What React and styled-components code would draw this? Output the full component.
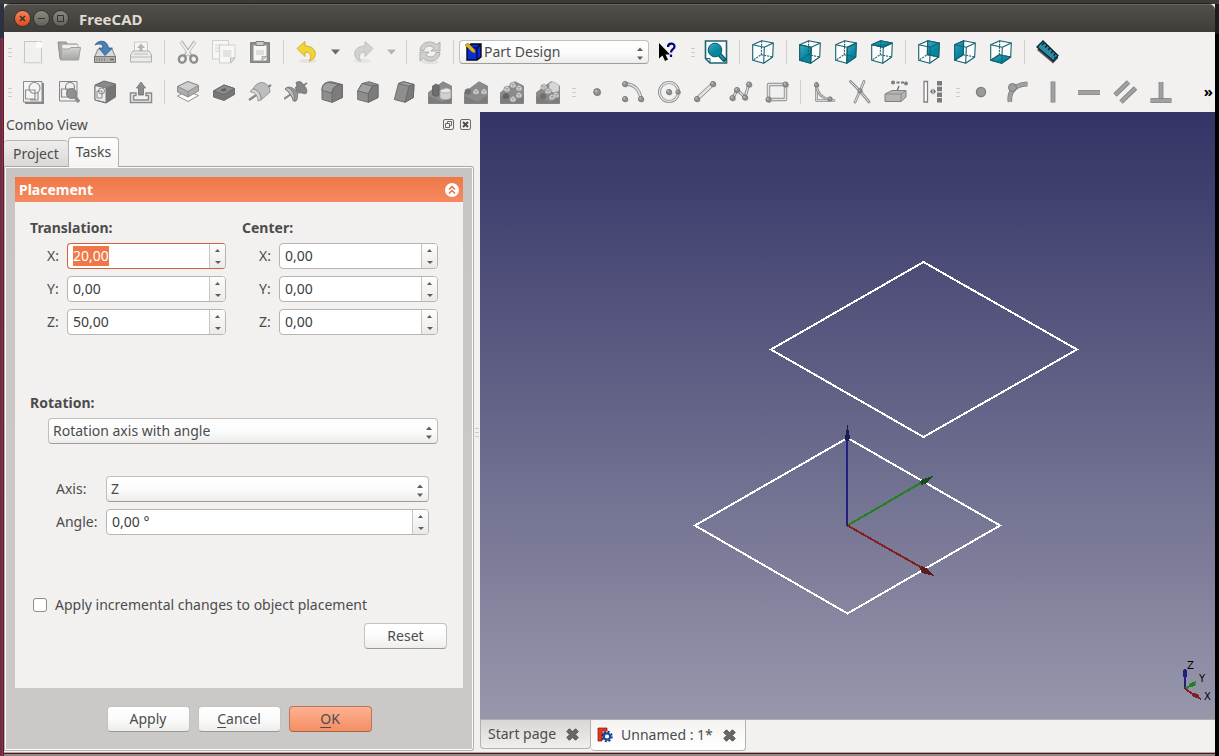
import React, { useEffect, useRef, useState } from 'react';
import styled, { createGlobalStyle } from 'styled-components';

const GlobalStyle = createGlobalStyle`
  * {
    box-sizing: border-box;
  }

  body {
    margin: 0;
    background: #3c3b37;
    color: #4c4c4c;
    font-family: 'Noto Sans', 'Open Sans', sans-serif;
    font-size: 14px;
    line-height: 20px;
  }

  button,
  input,
  select {
    font: inherit;
    color: inherit;
    margin: 0;
  }
`;

const SDesktop = styled.div`
  min-height: 100vh;
  display: flex;
  flex-direction: column;
  padding: 4px 4px 0 4px;
  background:
    linear-gradient(#3c3b37, #3c3b37) top / 100% 4px no-repeat,
    linear-gradient(#1c1c1c 34px, #000 34px) right / 4px 100% no-repeat,
    linear-gradient(90deg, #6b2c47 2px, #c0202a 2px) 0 38px / 3px 100% no-repeat,
    #2c3040;
`;

const SWindow = styled.div`
  flex: 1;
  display: flex;
  flex-direction: column;
  background: #f2f1f0;
`;

const STitleBar = styled.header`
  display: flex;
  align-items: center;
  gap: 2px;
  height: 28px;
  padding: 0 10px;
  border-top: 1px solid #65635c;
  border-radius: 6px 6px 0 0;
  box-shadow: 0 -4px 0 -3px #24231f;
  background: linear-gradient(#504f49, #3e3d39);
`;

const SWindowButton = styled.button`
  display: flex;
  width: 17px;
  height: 17px;
  padding: 0;
  border: 1px solid #33322e;
  border-radius: 50%;
  color: #34332f;
  background: ${(p) =>
    p.$close
      ? 'linear-gradient(#f4845c, #df4b1d)'
      : 'linear-gradient(#8b897f, #62605a)'};
`;

const STitle = styled.h1`
  margin: 0 0 0 8px;
  color: #dfdbd2;
  font-size: 15px;
  font-weight: bold;
`;

const SToolBar = styled.div`
  display: flex;
  gap: 2px;
  height: 40px;
  overflow: hidden;
`;

const SToolGroup = styled.div`
  display: flex;
  align-items: center;
`;

const SGrip = styled.span`
  width: 4px;
  height: 9px;
  margin: 0 3px 0 4px;
  background: repeating-linear-gradient(#cfcbc7 0 1px, transparent 1px 4px);
`;

const SSeparator = styled.span`
  width: 1px;
  height: 24px;
  margin: 0 5px;
  background: #d2cfcb;
`;

const SToolButton = styled.button`
  display: flex;
  align-items: center;
  justify-content: center;
  width: ${(p) => (p.$narrow ? 20 : 36)}px;
  height: 36px;
  padding: 0;
  border: 0;
  background: none;
`;

const SMore = styled.button`
  margin-left: auto;
  padding: 0 2px 2px;
  border: 0;
  background: none;
  color: #000;
  font-size: 15px;
  font-weight: bold;
`;

const SMain = styled.main`
  flex: 1;
  display: flex;
`;

const SDock = styled.aside`
  flex: 0 1 470px;
  display: flex;
  flex-direction: column;
  padding-bottom: 1px;
`;

const SDockTitle = styled.div`
  display: flex;
  align-items: center;
  gap: 5px;
  height: 25px;
  padding: 0 2px;
`;

const SDockName = styled.h2`
  flex: 1;
  margin: 0;
  font-size: 14px;
  font-weight: normal;
`;

const SDockButton = styled.button`
  display: flex;
  width: 12px;
  height: 12px;
  padding: 0;
  border: 0;
  background: none;
`;

const STabs = styled.div`
  display: flex;
  align-items: flex-end;
  height: 29px;
`;

const STab = styled.button`
  position: relative;
  height: ${(p) => (p.$active ? 30 : 26)}px;
  margin-bottom: ${(p) => (p.$active ? -1 : 0)}px;
  padding: 0 ${(p) => (p.$active ? 7 : 9)}px ${(p) => (p.$active ? 2 : 0)}px;
  border: 1px solid #b5b1ac;
  border-bottom: 0;
  border-left-width: ${(p) => (p.$active ? 1 : 0)}px;
  border-right-width: ${(p) => (p.$active ? 1 : 0)}px;
  border-radius: 4px 4px 0 0;
  background: ${(p) =>
    p.$active
      ? 'linear-gradient(#fefefe, #f5f4f3)'
      : 'linear-gradient(#efeeed, #dad8d6)'};
`;

const SPane = styled.div`
  flex: 1;
  display: flex;
  flex-direction: column;
  padding: 10px 10px 18px;
  border: 1px solid #b5b1ac;
  border-top-color: #a9a6a2;
  border-radius: 0 3px 3px 0;
  box-shadow: inset 0 0 0 1px #fbfbfa;
  background: linear-gradient(#c8c4c1, #cac9c7 60%, #cac9c7);
`;

const SGroup = styled.section`
  background: #f2f1f0;
`;

const SGroupHeader = styled.div`
  display: flex;
  align-items: center;
  justify-content: space-between;
  height: 25px;
  padding: 0 4px;
  color: #fff;
  font-weight: bold;
  background: linear-gradient(#f07746, #f58a62);
`;

const SGroupBody = styled.form`
  display: flex;
  flex-direction: column;
  padding: 16px 16px 39px 15px;
`;

const SColumns = styled.div`
  display: grid;
  grid-template-columns: 1fr 1fr;
  gap: 16px;
  padding-right: 9px;
`;

const SFields = styled.div`
  display: flex;
  flex-direction: column;
  gap: 7px;
`;

const SAngleFields = styled(SFields)`
  margin-top: 32px;
  padding: 0 18px 0 26px;
`;

const SHeading = styled.h3`
  margin: ${(p) => (p.$spaced ? 58 : 0)}px 0 5px;
  font-size: 14px;
  font-weight: bold;
`;

const SField = styled.div`
  display: grid;
  grid-template-columns: ${(p) => (p.$wide ? 50 : 37)}px 1fr;
  align-items: center;
`;

const SLabel = styled.label`
  padding-left: ${(p) => (p.$indent ? 17 : 0)}px;
`;

const SSpin = styled.div`
  display: flex;
  height: 26px;
  border: 1px solid #b8b4af;
  border-radius: 4px;
  overflow: hidden;
  background: #fff;

  &:has(input:focus) {
    border-color: #d2603a #b8b4af #d2603a #d2603a;
  }
`;

const SSpinInput = styled.input`
  flex: 1;
  min-width: 0;
  padding: 0 5px;
  border: 0;
  outline: 0;
  background: none;
  color: #3c3c3c;

  &::selection {
    background: #f07746;
    color: #fff;
  }
`;

const SSpinButtons = styled.div`
  display: flex;
  flex-direction: column;
  width: 16px;
  border-left: 1px solid #c9c6c2;
  background: linear-gradient(#fdfdfd, #eceae9);
`;

const SSpinButton = styled.button`
  flex: 1;
  display: flex;
  align-items: center;
  justify-content: center;
  padding: 0;
  border: 0;
  background: none;
`;

const SCombo = styled.div`
  position: relative;
  width: ${(p) => (p.$tool ? '190px' : 'auto')};
  margin-left: ${(p) => (p.$indent ? 18 : 0)}px;
  margin-right: ${(p) => (p.$indent ? 9 : 0)}px;

  svg {
    position: absolute;
    pointer-events: none;
  }
`;

const SSelect = styled.select`
  appearance: none;
  display: block;
  width: 100%;
  height: ${(p) => (p.$tool ? 24 : 26)}px;
  padding: 0 24px 0 ${(p) => (p.$tool ? 24 : 4)}px;
  border: 1px solid #c2beb9;
  border-bottom-color: #a09d99;
  border-radius: 4px;
  background: linear-gradient(#fff, #fcfcfc 50%, #edeceb);
`;

const SCheckRow = styled.div`
  display: flex;
  align-items: center;
  gap: 8px;
  margin: 60px 0 8px 3px;
`;

const SCheckbox = styled.input`
  appearance: none;
  width: 14px;
  height: 14px;
  border: 1px solid #8f8c88;
  border-radius: 3px;
  background: #fff;
`;

const SButton = styled.button`
  width: 83px;
  height: 26px;
  padding: 0;
  border: 1px solid ${(p) => (p.$primary ? '#b8765a' : '#c5c2be')};
  border-bottom-color: ${(p) => (p.$primary ? '#a5664c' : '#9c9995')};
  border-radius: 4px;
  background: ${(p) =>
    p.$primary
      ? 'linear-gradient(#ffb191, #f48e64)'
      : 'linear-gradient(#fff, #fbfbfb 50%, #eeedec)'};
`;

const SResetButton = styled(SButton)`
  align-self: flex-end;
`;

const SActions = styled.div`
  display: flex;
  justify-content: center;
  gap: 8px;
  margin-top: 18px;
`;

const SMnemonic = styled.span`
  text-decoration: underline;
  text-underline-offset: 3px;
`;

const SSplitter = styled.div`
  display: flex;
  flex: 0 0 6px;
  align-items: center;

  ${SGrip} {
    margin: 0 1px;
  }
`;

const SDocument = styled.section`
  flex: 1;
  display: flex;
  flex-direction: column;
  min-width: 0;
`;

const SViewport = styled.div`
  position: relative;
  flex: 1;
  display: flex;
  background: linear-gradient(#333366, #9797ac);
`;

const SScene = styled.svg`
  flex: 1;
  min-width: 0;
  height: 100%;
  min-height: 400px;
`;

const SCompass = styled.svg`
  position: absolute;
  right: 0;
  bottom: 14px;
`;

const SDocTabs = styled.div`
  display: flex;
  align-items: flex-start;
  height: 33px;
  border-top: 1px solid #b0adaa;
`;

const SDocTab = styled.div`
  display: flex;
  align-items: center;
  height: ${(p) => (p.$active ? 31 : 29)}px;
  padding: 0 ${(p) => (p.$active ? 9 : 11)}px 0 ${(p) => (p.$active ? 6 : 7)}px;
  border: 1px solid #b5b1ac;
  border-top: 0;
  border-left-width: ${(p) => (p.$active ? 0 : 1)}px;
  border-radius: 0 0 4px 4px;
  background: ${(p) =>
    p.$active
      ? 'linear-gradient(#f4f3f2, #fff)'
      : 'linear-gradient(#d9d6d4, #f0efee)'};
`;

const SDocTabName = styled.button`
  display: flex;
  align-items: center;
  gap: 8px;
  padding: 0;
  border: 0;
  background: none;
  white-space: nowrap;
`;

const SClose = styled.button`
  display: flex;
  margin-left: 10px;
  padding: 0;
  border: 0;
  background: none;
`;

const SFrameEdge = styled.footer`
  height: 4px;
  background: linear-gradient(#aaa8a5 0 1px, #5e1215 1px 2px, #8b8a85 2px);
`;

function Node({ x, y, r = 2.6 }) {
  return (
    <>
      <circle cx={x + 0.8} cy={y + 0.8} r={r} fill="#bdbdbd" />
      <circle cx={x} cy={y} r={r} fill="#929292" stroke="#707070" strokeWidth="0.8" />
      <circle cx={x - 0.8} cy={y - 0.8} r={r / 3} fill="#c4c4c4" />
    </>
  );
}

function Tube({ d, w = 3.4 }) {
  return (
    <g fill="none" strokeLinecap="round" strokeLinejoin="round">
      <path d={d} stroke="#8d8d8d" strokeWidth={w} />
      <path d={d} stroke="#e4e4e4" strokeWidth={w - 1.8} />
    </g>
  );
}

// Solid bar with a thin outline, used by the sketch constraints
function Bar({ d }) {
  return (
    <g fill="none">
      <path d={d} stroke="#858585" strokeWidth="4.8" />
      <path d={d} stroke="#a1a1a1" strokeWidth="3" />
    </g>
  );
}

const cubeFaces = {
  front: '1.7,4.7 13.3,7.3 12.7,23.3 1.7,20.3',
  right: '13.3,7.3 22.3,3 21.7,17 12.7,23.3',
  top: '1.7,4.7 10.7,0.7 22.3,3 13.3,7.3',
  rear: '10.7,0.7 22.3,3 21.7,17 10.3,14.7',
  left: '1.7,4.7 10.7,0.7 10.3,14.7 1.7,20.3',
  bottom: '1.7,20.3 10.3,14.7 21.7,17 12.7,23.3',
};

function ViewCube({ face }) {
  return (
    <g strokeLinejoin="round" strokeWidth="1.1" stroke="#16606f" fill="none">
      <path d="M1.7 4.7 10.7.7 22.3 3 21.7 17 12.7 23.3 1.7 20.3Z" fill="#fcfdfd" />
      {face && <polygon points={cubeFaces[face]} fill="url(#teal)" />}
      <path d="M10.7.7 10.3 14.7 1.7 20.3M10.3 14.7 21.7 17" strokeDasharray="2 1" />
      <path d="M1.7 4.7 13.3 7.3 22.3 3M13.3 7.3 12.7 23.3" />
    </g>
  );
}

function Block({ children, shape }) {
  return (
    <g stroke="#666" strokeWidth="0.9" strokeLinejoin="round">
      <path d={shape} fill="#8e8e8e" />
      {children}
    </g>
  );
}

function MiniBox({ x, y, fill = '#d0d0d0' }) {
  return (
    <g transform={`translate(${x} ${y})`} stroke="#7a7a7a" strokeWidth="0.5">
      <path d="M0 1.5 3 0 6 1.5V5L3 6.5 0 5Z" fill={fill} />
      <path d="M0 1.5 3 2.8 6 1.5M3 2.8V6.5" fill="none" />
    </g>
  );
}

function PatternBase() {
  return (
    <>
      <path d="M.5 12.5 15 1.7 23.5 6V23.500H.5Z" fill="#8b8b8b" stroke="#777" strokeWidth="0.7" />
      <path d="M.5 16 14 22 23.500 15V23.500H.5Z" fill="#7c7c7c" />
    </>
  );
}

const icons = {
  new: (
    <>
      <path d="M3.5 1.5H20.5V22.5H3.5Z" fill="#f0f0ef" stroke="#c6c6c5" />
      <circle cx="18" cy="5" r="3.5" fill="#fbfbfb" />
      <path d="M2 23H22" stroke="#dedddc" />
    </>
  ),
  open: (
    <>
      <path d="M1 2H9L10.5 4H20V19H3Z" fill="#a9a9a7" stroke="#8f8f8d" />
      <path d="M5 4.5H21V12H5Z" fill="#efefee" stroke="#b8b8b6" />
      <path d="M3.5 20 5 9H12L14 7.5H23.5L21.5 20Z" fill="url(#grey)" stroke="#a0a09e" />
    </>
  ),
  save: (
    <>
      <path d="M5 9H19L22.5 17V22.5H1.5V17Z" fill="#d9d9d7" stroke="#858583" />
      <path d="M1.5 16.5H22.5V22.5H1.5Z" fill="#b0b0ae" stroke="#777775" />
      <path d="M4 18V21M6.5 18V21M9 18V21M11.5 18V21" stroke="#888" />
      <path d="M17 19.5H21" stroke="#6b6b69" strokeWidth="1.5" />
      <path d="M2 5C4 .5 14-1.5 15.5 8H19.5L12 15.5 6 8H10C10 4 6 3 2 5Z" fill="#4b80b8" stroke="#275587" strokeWidth="0.8" />
    </>
  ),
  print: (
    <>
      <path d="M5.5 2H18.5V12H5.5Z" fill="#f6f6f5" stroke="#c9c9c7" />
      <path d="M12 3.5 16 8H13.5V12H10.5V8H8Z" fill="#b3b3b1" />
      <path d="M4 11H20L22.5 15V22H1.5V15Z" fill="#ebebea" stroke="#aeaeac" />
      <path d="M5 14H19M2 17H22" stroke="#bdbdbb" />
    </>
  ),
  cut: (
    <g fill="none">
      <path d="M5 1.5 15 16M19 1.5 9 16" stroke="#b0b0ae" strokeWidth="3.6" />
      <path d="M5 2 14 15M19 2 10 15" stroke="#f1f1f0" strokeWidth="1.8" />
      <ellipse cx="6.3" cy="19" rx="3.3" ry="3.7" stroke="#8d8d8b" strokeWidth="2.4" transform="rotate(25 6.3 19)" />
      <ellipse cx="17.7" cy="19" rx="3.3" ry="3.7" stroke="#8d8d8b" strokeWidth="2.4" transform="rotate(-25 17.7 19)" />
    </g>
  ),
  copy: (
    <g fill="#f7f7f6" stroke="#cfcfcd">
      <path d="M.5.5H16.5V19H.5Z" />
      <path d="M3 5H11M3 8H9M3 11H8" />
      <path d="M7.5 5H23V18L18.5 23H7.5Z" />
      <path d="M11 10H19.5V17H11Z" fill="#e2e2e1" stroke="none" />
      <path d="M18.5 23V18H23Z" fill="#e4e4e3" stroke="#b9b9b7" />
    </g>
  ),
  paste: (
    <>
      <path d="M2.5 2.5H21.5V22.5H2.5Z" fill="#8f8f8d" stroke="#80807e" />
      <path d="M5.5 5.5H18.5V20.5H5.5Z" fill="#f6f6f5" />
      <path d="M8 1.5H16V5.5H8Z" fill="#c9c9c7" stroke="#80807e" />
      <path d="M8 10H16V15H8Z" fill="#dededd" />
      <path d="M14 20.5V16.5H18.5Z" fill="#d2d2d0" stroke="#979795" strokeWidth="0.7" />
    </>
  ),
  undo: (
    <>
      <ellipse cx="13" cy="21" rx="9" ry="2" fill="#e4e3e2" />
      <path d="M2 8.5 10 1.5V6C17 6 21.5 10 20 16 19 19.5 16 20.5 14 21 17 17 16 12 10 12V16.5Z" fill="#f0d43c" stroke="#cfab12" strokeWidth="0.9" />
    </>
  ),
  redo: (
    <>
      <ellipse cx="11" cy="21" rx="9" ry="2" fill="#e6e5e4" />
      <path d="M22 8.5 14 1.5V6C7 6 2.5 10 4 16 5 19.5 8 20.5 10 21 7 17 8 12 14 12V16.5Z" fill="#d2d2d0" stroke="#bababa" strokeWidth="0.9" />
    </>
  ),
  refresh: (
    <>
      <ellipse cx="12" cy="22" rx="9" ry="2" fill="#e3e2e1" />
      <g fill="#cfcfcd" stroke="#aaaaa8" strokeWidth="0.9">
        <path d="M2 10.5C2 3 12-1 18.5 4.5L22 2V11H13L16 8C12 4.5 7 6 6 10.5Z" />
        <path d="M22 12.5C22 20 12 24 5.5 18.5L2 21V12H11L8 15C12 18.5 17 17 18 12.5Z" />
      </g>
    </>
  ),
  whatsThis: (
    <>
      <path d="M4 3V18.5L7.5 15.5 10 21 13 19.5 10.5 14.5H15Z" fill="#000" />
      <path d="M13 7C13 2.5 19.5 2.5 19.5 6.5 19.5 9.5 16 9 16 12.5M16 14.5V17" fill="none" stroke="#00007a" strokeWidth="2.2" />
    </>
  ),
  fit: (
    <>
      <path d="M1.5 1H22.5V23H6L1.5 18.5Z" fill="#fff" stroke="#1d6472" strokeWidth="1.6" />
      <path d="M1.5 18.5H6V23" fill="none" stroke="#1d6472" />
      <path d="M15 14 20 19.5" stroke="#0d4b58" strokeWidth="4.5" strokeLinecap="round" />
      <path d="M15.5 14.5 19.5 19" stroke="#1c91ad" strokeWidth="2.4" strokeLinecap="round" />
      <circle cx="11" cy="10" r="6.8" fill="url(#teal)" stroke="#0e5766" />
    </>
  ),
  axo: <ViewCube />,
  front: <ViewCube face="front" />,
  right: <ViewCube face="right" />,
  top: <ViewCube face="top" />,
  rear: <ViewCube face="rear" />,
  left: <ViewCube face="left" />,
  bottom: <ViewCube face="bottom" />,
  measure: (
    <>
      <path d="M1 10 6 5 22 18 17 23.5Z" fill="#555" />
      <path d="M1 7 7 1 22 15.5 17.5 21Z" fill="#2a8ba5" stroke="#0b252c" strokeWidth="1.3" />
      <path d="M8 3 6 5M11 5.5 9 7.5M14 8 12 10M17 11 15 13M19.5 13.5 17.5 15.5" stroke="#051c22" strokeWidth="1.3" />
      <path d="M18 17 22 16V18L18 21.5Z" fill="#0c414d" />
    </>
  ),
  sketch: (
    <>
      <path d="M4 3H23V24H4Z" fill="#888" />
      <path d="M2.5 1.5H21V22H2.5Z" fill="#f4f4f4" stroke="#8a8a8a" />
      <g fill="none" stroke="#8f8f8f" strokeWidth="1.2">
        <circle cx="13.500" cy="8" r="5.5" />
        <path d="M4.5 10H14V19H4.500ZM17 12V20H9" />
      </g>
    </>
  ),
  sketchView: (
    <>
      <path d="M2.5 1.5H20V21H2.5Z" fill="#f0f0f0" stroke="#858585" />
      <g fill="none" stroke="#858585" strokeWidth="1.2">
        <circle cx="13" cy="7" r="4.5" />
        <path d="M4.5 9H11V17H4.5Z" />
      </g>
      <circle cx="14.5" cy="13.5" r="5" fill="#919191" stroke="#777" />
      <path d="M18 17 22 22" stroke="#8a8a8a" strokeWidth="3.5" />
    </>
  ),
  sketchMap: (
    <>
      <path d="M2 5 11 1 22.5 4V17L13 23 2 20Z" fill="#8a8a8a" stroke="#6b6b6b" />
      <path d="M13 8 22.5 4V17L13 23Z" fill="#757575" />
      <path d="M2 5.5 13 8V22.5L2 20Z" fill="#ededed" stroke="#777" />
      <circle cx="8.5" cy="11" r="3" fill="none" stroke="#888" />
      <path d="M4 11H9V18H4Z" fill="none" stroke="#888" />
    </>
  ),
  leave: (
    <g stroke="#777" strokeWidth="0.9">
      <path d="M1.5 13H7V15.5H4.5V20H19.5V15.5H17V13H22.5V22.5H1.5Z" fill="#f1f1f1" stroke="#8a8a8a" strokeWidth="1.5" />
      <path d="M12 2 16.5 8H14.5V15H9.5V8H7.5Z" fill="#8c8c8c" />
    </g>
  ),
  pad: (
    <g stroke="#858585" strokeWidth="0.9" strokeLinejoin="round">
      <path d="M1.5 16 11 11 22.5 15.500 12 21.5Z" fill="#fff" />
      <path d="M1.5 6.5 12 1.5 22.5 5.5V11L12 17 1.5 12Z" fill="#adadad" />
      <path d="M1.5 6.5 12 1.5 22.5 5.5 12 11.5Z" fill="#cfcfcf" />
      <path d="M12 11.5V17" />
    </g>
  ),
  pocket: (
    <g stroke="#666" strokeWidth="0.9" strokeLinejoin="round">
      <path d="M1.5 11 12 5 22.5 8.5V14.500L12 20.5 1.5 17Z" fill="#777" />
      <path d="M1.5 11 12 5 22.5 8.500 12 14.500Z" fill="#8c8c8c" />
      <path d="M8 10 13 8 14.500 10.500 11 11.500Z" fill="#5f5f5f" stroke="none" />
    </g>
  ),
  revolve: (
    <g stroke="#858585" strokeWidth="0.8">
      <path d="M1 20 23 5" stroke="#8a8a8a" strokeWidth="2.4" />
      <path d="M5 9C7 5 10 2.500 14 2.5C19 3 22 7 22 12L13 20C13 15 11 10 5 9Z" fill="#bdbdbd" />
      <path d="M2.500 12C3 10 4 9 5 9 11 10 13 15 13 20L10 21C10 16 7 12 2.500 12Z" fill="#d5d5d5" />
    </g>
  ),
  groove: (
    <g stroke="#6b6b6b" strokeWidth="0.8">
      <path d="M0 19 23 3" stroke="#858585" strokeWidth="2" />
      <path d="M12 2.500C15 1 17 1.500 18 3 21 6 24 10 22.500 13 21 15 18 12 15 13L11 8C13 7 13 5 12 2.500Z" fill="#858585" />
      <path d="M1 9C3 6.500 7 6.500 10 9L14 13C13 16 14 19 12 21 9 22 9 19 8 17 6 13 4 11 1 9Z" fill="#989898" />
      <path d="M1 9C3 7 5 7.500 7 10 10 13 11 17 10 21 9 22 9 19 8 17 6 13 4 11 1 9Z" fill="#c2c2c2" />
    </g>
  ),
  fillet: (
    <Block shape="M2 9C2 4 6 1.7 11.5 1.7L22.3 4.5V17.5L12 22.3 2 19.5Z">
      <path d="M2 10.500C2 5 5 2.700 9 2.500L21 5C16 5 12 8 12 13Z" fill="#a0a0a0" />
      <path d="M12 13C12 8 16 4.500 22.3 4.5V17.5L12 22.3Z" fill="#7c7c7c" />
    </Block>
  ),
  chamfer: (
    <Block shape="M1.7 11 6 3.5 13 1.7 22 4.5V17.5L12.3 22.3 1.7 19.5Z">
      <path d="M1.7 11 6 3.5 16.500 6 12.3 13.500Z" fill="#a2a2a2" />
      <path d="M12.3 13.500 16.500 6 22 4.5V17.5L12.3 22.3Z" fill="#7c7c7c" />
    </Block>
  ),
  draft: (
    <Block shape="M6.5 3.5 11.5 1.7 22 4.5 21.3 17.5 13 22.3 2.3 19.5Z">
      <path d="M6.5 3.5 11.5 1.7 22 4.5 17 6.200Z" fill="#a1a1a1" />
      <path d="M17 6.200 22 4.500 21.3 17.5 13 22.3Z" fill="#7a7a7a" />
    </Block>
  ),
  mirrored: (
    <>
      <PatternBase />
      <path d="M4.500 6 8 4 11 5.500V15L8 16.5 4.500 15Z" fill="#6c6c6c" stroke="#575757" strokeWidth="0.7" />
      <path d="M12 11V17.500C13 20.500 22 20.500 23 17.500V11Z" fill="#d0d0d0" stroke="#999" strokeWidth="0.7" />
      <path d="M12 11C13 8.500 16 9.500 18 8 21 8.500 23 9.500 23 11 22 13.500 13 13.500 12 11Z" fill="#e6e6e6" stroke="#a5a5a5" strokeWidth="0.7" />
    </>
  ),
  linear: (
    <>
      <PatternBase />
      <MiniBox x={1} y={8.5} fill="#6c6c6c" />
      <MiniBox x={9} y={8.5} />
      <MiniBox x={17} y={8.5} />
    </>
  ),
  polar: (
    <>
      <PatternBase />
      <MiniBox x={10} y={2} />
      <MiniBox x={16} y={5} />
      <MiniBox x={4} y={6} />
      <MiniBox x={16} y={12} />
      <MiniBox x={3} y={13} fill="#5c5c5c" />
      <MiniBox x={10} y={16} />
    </>
  ),
  multi: (
    <>
      <PatternBase />
      <path d="M13 3.500 17 1.500 23 5V11L18 13 13 10Z" fill="#d6d6d6" stroke="#999" strokeWidth="0.5" />
      <MiniBox x={5} y={4} />
      <MiniBox x={9} y={8} />
      <MiniBox x={4} y={13} fill="#6c6c6c" />
      <MiniBox x={13} y={14} />
      <MiniBox x={17} y={12} />
    </>
  ),
  point: <Node x={12} y={12} r={3.4} />,
  arc: (
    <>
      <Tube d="M5 4C13 4 19 10 20 19" />
      <Node x={4} y={4} />
      <Node x={20} y={19} />
      <Node x={4} y={19} />
    </>
  ),
  circle: (
    <>
      <circle cx="12" cy="12" r="9.5" fill="none" stroke="#8d8d8d" strokeWidth="3" />
      <circle cx="12" cy="12" r="9.5" fill="none" stroke="#e6e6e6" strokeWidth="1.3" />
      <Node x={12} y={12} />
      <Node x={21} y={12} r={2.2} />
    </>
  ),
  line: (
    <>
      <Tube d="M4 19 20 4" w={4.200} />
      <Node x={4} y={19} />
      <Node x={20} y={4} />
    </>
  ),
  polyline: (
    <>
      <Tube d="M4 18 8 10 16 17 20 4" w={3} />
      <Node x={3.5} y={18} />
      <Node x={8} y={10} />
      <Node x={16} y={17.5} />
      <Node x={20} y={4.5} />
    </>
  ),
  rectangle: (
    <>
      <Tube d="M3.5 4.5H20.5V19.5H3.5Z" />
      <Node x={20.5} y={4.5} />
      <Node x={3.5} y={19.5} />
    </>
  ),
  sketchFillet: (
    <>
      <Tube d="M4.5 3V20.5H22" w={2.6} />
      <Tube d="M4.5 5C5 13 9 18 18 19.5" w={2.6} />
      <Node x={4.5} y={5} r={2.2} />
      <Node x={18} y={19} r={2.2} />
    </>
  ),
  trim: (
    <>
      <Tube d="M2.500 1.500 12 11 21 22" w={2.8} />
      <Tube d="M16 1.500 12 11 7 22" w={2.8} />
      <Node x={12} y={11} r={2.2} />
    </>
  ),
  external: (
    <>
      <path d="M8 2.5H22" stroke="#777" strokeWidth="2" strokeDasharray="3 1.5" />
      <circle cx="9" cy="2.5" r="2" fill="#808080" />
      <circle cx="22" cy="3.5" r="2" fill="#808080" />
      <path d="M15 6 13 11" stroke="#666" strokeWidth="1.3" />
      <path d="M1 14 8 10.5H22V17L17 21.5H1Z" fill="#b4b4b4" stroke="#808080" />
      <path d="M1 14H17L22 10.5M17 14V21.5" fill="none" stroke="#8b8b8b" />
    </>
  ),
  symmetric: (
    <>
      <path d="M4 1.5H7.5V22H4Z" fill="#fff" stroke="#808080" strokeWidth="1.3" />
      <path d="M10 11.5 12.5 8.5V14.5ZM16 11.5 13.5 8.5V14.5Z" fill="#6e6e6e" />
      <path d="M19.5 1V23" stroke="#7b7b7b" strokeWidth="5" strokeDasharray="4.5 1.2" />
    </>
  ),
  coincident: <circle cx="12" cy="12" r="4.6" fill="#999" stroke="#7c7c7c" strokeWidth="1.2" />,
  tangent: (
    <>
      <Bar d="M5 22C3.5 12 10 4 22.5 4" />
      <circle cx="7.5" cy="7.5" r="4" fill="#9d9d9d" stroke="#7a7a7a" />
    </>
  ),
  vertical: <Bar d="M12 1.5V22.5" />,
  horizontal: <Bar d="M1 12.5H23" />,
  parallel: (
    <>
      <Bar d="M2 15 15.5 2" />
      <Bar d="M8 22 22.5 8" />
    </>
  ),
  perpendicular: (
    <>
      <Bar d="M12 2V20" />
      <Bar d="M1.5 20.5H22.5" />
    </>
  ),
};

const fileTools = [
  'new', 'open', 'save', 'print', '|', 'cut', 'copy', 'paste', '|',
  'undo', 'v', 'redo', 'v', '|', 'refresh', '|',
];
const viewTools = [
  'fit', '|', 'axo', '|', 'front', 'right', 'top', '|',
  'rear', 'left', 'bottom', '|', 'measure',
];
const partTools = [
  'sketch', 'sketchView', 'sketchMap', 'leave', '|',
  'pad', 'pocket', 'revolve', 'groove', 'fillet', 'chamfer', 'draft',
  'mirrored', 'linear', 'polar', 'multi',
];
const geometryTools = [
  'point', 'arc', 'circle', 'line', 'polyline', 'rectangle', '|',
  'sketchFillet', 'trim', 'external', 'symmetric',
];
const constraintTools = [
  'coincident', 'tangent', 'vertical', 'horizontal', 'parallel', 'perpendicular',
];

function Tools({ items }) {
  return items.map((item, i) => {
    if (item === '|') return <SSeparator key={i} />;
    if (item === 'v') {
      return (
        <SToolButton key={i} $narrow aria-label="history">
          <svg width="9" height="6" viewBox="0 0 9 6">
            <path d="M0 .5H9L4.5 5.5Z" fill={i > 11 ? '#b5b3b0' : '#6b6966'} />
          </svg>
        </SToolButton>
      );
    }
    return (
      <SToolButton key={i} aria-label={item}>
        <svg width="24" height="24" viewBox="0 0 24 24">{icons[item]}</svg>
      </SToolButton>
    );
  });
}

const SDefs = styled.svg`
  display: block;
`;

function SharedGradients() {
  return (
    <SDefs width="0" height="0" aria-hidden="true">
      <defs>
        <linearGradient id="teal" x1="0" y1="0" x2="0.6" y2="1">
          <stop offset="0" stopColor="#3fabc6" />
          <stop offset="0.7" stopColor="#04869f" />
        </linearGradient>
        <linearGradient id="grey" x1="0" y1="0" x2="0" y2="1">
          <stop offset="0" stopColor="#d2d2d0" />
          <stop offset="1" stopColor="#a5a5a3" />
        </linearGradient>
      </defs>
    </SDefs>
  );
}

const SArrows = styled.svg`
  right: 5px;
  top: ${(p) => (p.$tool ? 7 : 8)}px;
`;

const SWorkbenchIcon = styled.svg`
  left: 6px;
  top: 3px;
`;

function Combo({ id, options, tool, indent, children }) {
  return (
    <SCombo $tool={tool} $indent={indent}>
      <SSelect id={id} $tool={tool} aria-label={indent || tool ? options[0] : undefined}>
        {options.map((o) => (
          <option key={o}>{o}</option>
        ))}
      </SSelect>
      {children}
      <SArrows $tool={tool} width="8" height="13" viewBox="0 0 8 13">
        <path d="M1 4 4 .5 7 4ZM1 9.5H7L4 13Z" fill="#5f5d5a" />
      </SArrows>
    </SCombo>
  );
}

function SpinField({ id, label, initial, wide, selected }) {
  const [value, setValue] = useState(initial);
  const ref = useRef(null);

  useEffect(() => {
    if (!selected) return;
    ref.current.focus();
    ref.current.select();
  }, [selected]);

  function step(delta) {
    const number = parseFloat(value.replace(',', '.')) + delta;
    setValue(number.toFixed(2).replace('.', ',') + (wide ? ' °' : ''));
  }

  return (
    <SField $wide={wide}>
      <SLabel htmlFor={id} $indent={!wide}>{label}</SLabel>
      <SSpin>
        <SSpinInput
          id={id}
          ref={ref}
          size="4"
          value={value}
          onChange={(e) => setValue(e.target.value)}
        />
        <SSpinButtons>
          <SSpinButton type="button" aria-label="increase" onClick={() => step(1)}>
            <svg width="5" height="3"><path d="M0 3 2.5 0 5 3Z" fill="#5f5d5a" /></svg>
          </SSpinButton>
          <SSpinButton type="button" aria-label="decrease" onClick={() => step(-1)}>
            <svg width="6" height="3"><path d="M0 0H6L3 3Z" fill="#5f5d5a" /></svg>
          </SSpinButton>
        </SSpinButtons>
      </SSpin>
    </SField>
  );
}

function PlacementForm() {
  return (
    <SGroupBody onSubmit={(e) => e.preventDefault()}>
      <SColumns>
        <div>
          <SHeading>Translation:</SHeading>
          <SFields>
            <SpinField id="tx" label="X:" initial="20,00" selected />
            <SpinField id="ty" label="Y:" initial="0,00" />
            <SpinField id="tz" label="Z:" initial="50,00" />
          </SFields>
        </div>
        <div>
          <SHeading>Center:</SHeading>
          <SFields>
            <SpinField id="cx" label="X:" initial="0,00" />
            <SpinField id="cy" label="Y:" initial="0,00" />
            <SpinField id="cz" label="Z:" initial="0,00" />
          </SFields>
        </div>
      </SColumns>
      <SHeading $spaced>Rotation:</SHeading>
      <Combo id="rotation" indent options={['Rotation axis with angle', 'Euler angles']} />
      <SAngleFields>
        <SField $wide>
          <SLabel htmlFor="axis">Axis:</SLabel>
          <Combo id="axis" options={['Z', 'Y', 'X']} />
        </SField>
        <SpinField id="angle" label="Angle:" initial="0,00 °" wide />
      </SAngleFields>
      <SCheckRow>
        <SCheckbox type="checkbox" id="incremental" />
        <SLabel htmlFor="incremental">Apply incremental changes to object placement</SLabel>
      </SCheckRow>
      <SResetButton type="reset">Reset</SResetButton>
    </SGroupBody>
  );
}

function CloseMark() {
  return (
    <svg width="13" height="13" viewBox="0 0 13 13">
      <path
        d="M3.5.8 6.5 3.8 9.5.8 12.2 3.5 9.2 6.5 12.2 9.5 9.5 12.2 6.5 9.2 3.5 12.2.8 9.5 3.8 6.5.8 3.5Z"
        fill="#6a6865"
        stroke="#4f4d4a"
      />
    </svg>
  );
}

function Scene() {
  return (
    <SScene viewBox="0 0 735 607" aria-label="3D view">
      <g fill="none" stroke="#fff" strokeWidth="2" shapeRendering="crispEdges">
        <path d="M443.5 150 597 237.5 443.5 325 291 237.5Z" />
        <path d="M367.5 326 520 413.5 367.5 501.5 215 413.5Z" />
      </g>
      <g strokeWidth="2" shapeRendering="crispEdges">
        <path d="M367.5 413.5 444 369" stroke="#23801f" />
        <path d="M367.5 413.5 444 457" stroke="#82201f" />
        <path d="M367 414V326" stroke="#20207f" />
        <path d="M367.5 313 370 326 369 329H366L365 326Z" fill="#1c1c55" />
        <path d="M455 363 445 372 441 373 440 369 443 367Z" fill="#1b4b1b" />
        <path d="M454 464 442 461 440 457 442 454 446 456Z" fill="#5e1a1f" />
      </g>
    </SScene>
  );
}

function Compass() {
  return (
    <SCompass width="38" height="48" viewBox="0 0 38 48">
      <g fill="none" shapeRendering="crispEdges">
        <path d="M8 32V12" stroke="#20207f" strokeWidth="2" />
        <path d="M8 13V20" stroke="#20207f" strokeWidth="4" />
        <path d="M8 32 19 25" stroke="#23801f" strokeWidth="2" />
        <path d="M13 29 18 26" stroke="#23801f" strokeWidth="4" />
        <path d="M8 32 24 42" stroke="#82201f" strokeWidth="2" />
        <path d="M16 37 21 40" stroke="#82201f" strokeWidth="4" />
      </g>
      <g fill="#000" fontFamily="DejaVu Sans" fontSize="10">
        <text x="10" y="12">Z</text>
        <text x="22" y="25">Y</text>
        <text x="27" y="43">X</text>
      </g>
    </SCompass>
  );
}

function App() {
  return (
    <SDesktop>
      <GlobalStyle />
      <SWindow>
        <STitleBar>
          <SWindowButton $close aria-label="Close">
            <svg width="15" height="15"><path d="M5 5 10 10M10 5 5 10" stroke="currentColor" strokeWidth="1.5" /></svg>
          </SWindowButton>
          <SWindowButton aria-label="Minimize">
            <svg width="15" height="15"><path d="M4 7.5H11" stroke="currentColor" /></svg>
          </SWindowButton>
          <SWindowButton aria-label="Maximize">
            <svg width="15" height="15"><path d="M4.5 4.5H10.5V10.5H4.5Z" fill="none" stroke="currentColor" /></svg>
          </SWindowButton>
          <STitle>FreeCAD</STitle>
        </STitleBar>
        <SharedGradients />
        <SToolBar>
          <SToolGroup>
            <SGrip />
            <Tools items={fileTools} />
            <Combo id="workbench" tool options={['Part Design', 'Part', 'Draft']}>
              <SWorkbenchIcon width="18" height="18" viewBox="0 0 18 18">
                <path d="M2 4 6 1H16V14L12 17H2Z" fill="#0a2bd8" stroke="#000814" strokeWidth="1.4" />
                <path d="M12 5V17M12 5 16 1M7 5H12" stroke="#000814" strokeWidth="1.2" />
                <path d="M0 2 3 0 10 7V10L7 9Z" fill="#e0b41c" stroke="#8a6a10" strokeWidth="0.6" />
              </SWorkbenchIcon>
            </Combo>
            <Tools items={['whatsThis']} />
          </SToolGroup>
          <SToolGroup>
            <SGrip />
            <Tools items={viewTools} />
          </SToolGroup>
        </SToolBar>
        <SToolBar>
          <SToolGroup>
            <SGrip />
            <Tools items={partTools} />
          </SToolGroup>
          <SToolGroup>
            <SGrip />
            <Tools items={geometryTools} />
          </SToolGroup>
          <SToolGroup>
            <SGrip />
            <Tools items={constraintTools} />
          </SToolGroup>
          <SMore>»</SMore>
        </SToolBar>
        <SMain>
          <SDock>
            <SDockTitle>
              <SDockName>Combo View</SDockName>
              <SDockButton aria-label="Float">
                <svg width="12" height="12" fill="none" stroke="#6b6966">
                  <rect x="0.5" y="0.5" width="10" height="10" rx="1.5" />
                  <path d="M4.5 4.5V2.5H8.5V6.5H6.5M2.5 4.5H6.5V8.5H2.5Z" />
                </svg>
              </SDockButton>
              <SDockButton aria-label="Close panel">
                <svg width="12" height="12" fill="none" stroke="#6b6966">
                  <rect x="0.5" y="0.5" width="10" height="10" rx="1.5" />
                  <path d="M3 3 8 8M8 3 3 8" stroke="#4f4d4a" strokeWidth="2" />
                </svg>
              </SDockButton>
            </SDockTitle>
            <STabs>
              <STab>Project</STab>
              <STab $active>Tasks</STab>
            </STabs>
            <SPane>
              <SGroup>
                <SGroupHeader>
                  Placement
                  <svg width="14" height="14" viewBox="0 0 14 14">
                    <circle cx="7" cy="7" r="7" fill="#fff" />
                    <path d="M4 6.5 7 3.5 10 6.5M4 10.5 7 7.5 10 10.5" fill="none" stroke="#e8683a" strokeWidth="1.4" />
                  </svg>
                </SGroupHeader>
                <PlacementForm />
              </SGroup>
              <SActions>
                <SButton>Apply</SButton>
                <SButton><SMnemonic>C</SMnemonic>ancel</SButton>
                <SButton $primary><SMnemonic>O</SMnemonic>K</SButton>
              </SActions>
            </SPane>
          </SDock>
          <SSplitter><SGrip /></SSplitter>
          <SDocument>
            <SViewport>
              <Scene />
              <Compass />
            </SViewport>
            <SDocTabs>
              <SDocTab>
                <SDocTabName>Start page</SDocTabName>
                <SClose aria-label="Close Start page"><CloseMark /></SClose>
              </SDocTab>
              <SDocTab $active>
                <SDocTabName>
                  <svg width="16" height="16" viewBox="0 0 16 16">
                    <path d="M1 1H10V4H5V6H8V9H5V14H1Z" fill="#e8371a" stroke="#7c1a0c" strokeWidth="0.7" />
                    <circle cx="10" cy="9.5" r="4.8" fill="none" stroke="#122f7c" strokeWidth="1.8" strokeDasharray="2 1.77" />
                    <circle cx="10" cy="9.5" r="3.2" fill="#fff" stroke="#1a4aa8" strokeWidth="2.2" />
                  </svg>
                  Unnamed : 1*
                </SDocTabName>
                <SClose aria-label="Close Unnamed"><CloseMark /></SClose>
              </SDocTab>
            </SDocTabs>
          </SDocument>
        </SMain>
        <SFrameEdge />
      </SWindow>
    </SDesktop>
  );
}

export default App;
